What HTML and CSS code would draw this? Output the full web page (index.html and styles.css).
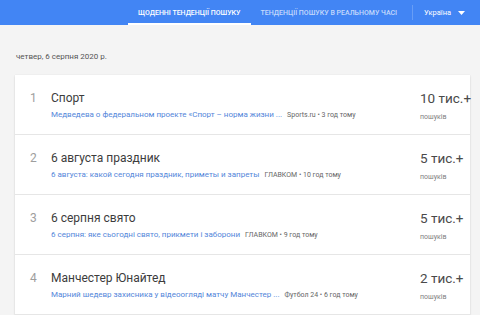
FILE: index.html
```html
<!DOCTYPE html>
<html lang="uk">
<head>
  <meta charset="UTF-8">
  <meta name="viewport" content="width=device-width, initial-scale=1.0">
  <title>Тенденції пошуку</title>
  <link rel="stylesheet" href="styles.css">
</head>
<body>
  <header class="top-bar">
    <nav class="tabs">
      <a class="tab tab-active">Щоденні тенденції пошуку</a>
      <a class="tab">Тенденції пошуку в реальному часі</a>
    </nav>
    <div class="region">
      <span>Україна</span>
      <svg class="caret" width="7" height="4" viewBox="0 0 7 4"><path d="M0 0h7L3.5 4z" fill="#fff"/></svg>
    </div>
  </header>

  <main class="feed">
    <p class="feed-date">четвер, 6 серпня 2020 р.</p>

    <div class="trend-card">
      <div class="trend-row">
        <div class="trend-index">1</div>
        <div class="trend-main">
          <div class="trend-title">Спорт</div>
          <div class="trend-meta">
            <span class="trend-link">Медведева о федеральном проекте «Спорт – норма жизни ...</span>
            <span class="trend-source">Sports.ru • 3 год тому</span>
          </div>
        </div>
        <div class="trend-count">
          <div class="count-value">10 тис.+</div>
          <div class="count-label">пошуків</div>
        </div>
      </div>

      <div class="trend-row">
        <div class="trend-index">2</div>
        <div class="trend-main">
          <div class="trend-title">6 августа праздник</div>
          <div class="trend-meta">
            <span class="trend-link">6 августа: какой сегодня праздник, приметы и запреты</span>
            <span class="trend-source">ГЛАВКОМ • 10 год тому</span>
          </div>
        </div>
        <div class="trend-count">
          <div class="count-value">5 тис.+</div>
          <div class="count-label">пошуків</div>
        </div>
      </div>

      <div class="trend-row">
        <div class="trend-index">3</div>
        <div class="trend-main">
          <div class="trend-title">6 серпня свято</div>
          <div class="trend-meta">
            <span class="trend-link">6 серпня: яке сьогодні свято, прикмети і заборони</span>
            <span class="trend-source">ГЛАВКОМ • 9 год тому</span>
          </div>
        </div>
        <div class="trend-count">
          <div class="count-value">5 тис.+</div>
          <div class="count-label">пошуків</div>
        </div>
      </div>

      <div class="trend-row">
        <div class="trend-index">4</div>
        <div class="trend-main">
          <div class="trend-title">Манчестер Юнайтед</div>
          <div class="trend-meta">
            <span class="trend-link">Марний шедевр захисника у відеоогляді матчу Манчестер ...</span>
            <span class="trend-source">Футбол 24 • 6 год тому</span>
          </div>
        </div>
        <div class="trend-count">
          <div class="count-value">2 тис.+</div>
          <div class="count-label">пошуків</div>
        </div>
      </div>
    </div>
  </main>
</body>
</html>
```

FILE: styles.css
```css
:root {
  --blue: #4285f4;
  --page-bg: #f4f4f4;
  --card-bg: #ffffff;
  --text: #333333;
  --text-muted: #757575;
  --link: #5386da;
  --border: #e6e6e6;
}

* {
  margin: 0;
  padding: 0;
  box-sizing: border-box;
  font-family: Roboto, 'Noto Sans', sans-serif;
}

body {
  background-color: var(--page-bg);
  color: var(--text);
  width: 480px;
  height: 315px;
  overflow: hidden;
}

.top-bar {
  display: flex;
  align-items: stretch;
  height: 25px;
  background-color: var(--blue);
  padding-left: 128px;
}

.tabs {
  display: flex;
}

.tab {
  display: flex;
  align-items: center;
  padding: 0 10px;
  font-size: 7px;
  font-weight: 500;
  text-transform: uppercase;
  color: rgba(255, 255, 255, 0.7);
  white-space: nowrap;
}

.tab-active {
  color: #fff;
  border-bottom: 2px solid #fff;
  padding-top: 2px;
}

.region {
  display: flex;
  align-items: center;
  gap: 7px;
  margin-left: 5px;
  padding-left: 12px;
  font-size: 7.5px;
  color: #fff;
  position: relative;
}

.region::before {
  content: '';
  position: absolute;
  left: 0;
  top: 5px;
  bottom: 5px;
  width: 1px;
  background-color: rgba(255, 255, 255, 0.2);
}

.caret {
  display: block;
}

.feed {
  padding: 0 10px 0 15px;
}

.feed-date {
  font-size: 8px;
  color: #555;
  padding: 27px 0 13px 1px;
  line-height: 10px;
}

.trend-card {
  background-color: var(--card-bg);
  box-shadow: 0 1px 2px rgba(0, 0, 0, 0.12), 0 0 1px rgba(0, 0, 0, 0.08);
}

.trend-row {
  display: flex;
  height: 60px;
  border-bottom: 1px solid var(--border);
}

.trend-index {
  width: 36px;
  padding: 15px 0 0 15px;
  font-size: 12px;
  line-height: 16px;
  color: #9e9e9e;
}

.trend-main {
  flex: 1;
  min-width: 0;
  padding-top: 15px;
}

.trend-title {
  font-size: 12px;
  line-height: 16px;
  color: #3c3c3c;
}

.trend-meta {
  display: flex;
  gap: 5px;
  margin-top: 4px;
  font-size: 8px;
  line-height: 10px;
  white-space: nowrap;
}

.trend-link {
  color: var(--link);
}

.trend-source {
  font-size: 7px;
  color: #666;
}

.trend-count {
  width: 50px;
  padding-top: 14px;
  white-space: nowrap;
}

.count-value {
  font-size: 13.5px;
  line-height: 18px;
  color: #4a4a4a;
}

.count-label {
  font-size: 7px;
  color: #808080;
  margin-top: 6px;
}
```
